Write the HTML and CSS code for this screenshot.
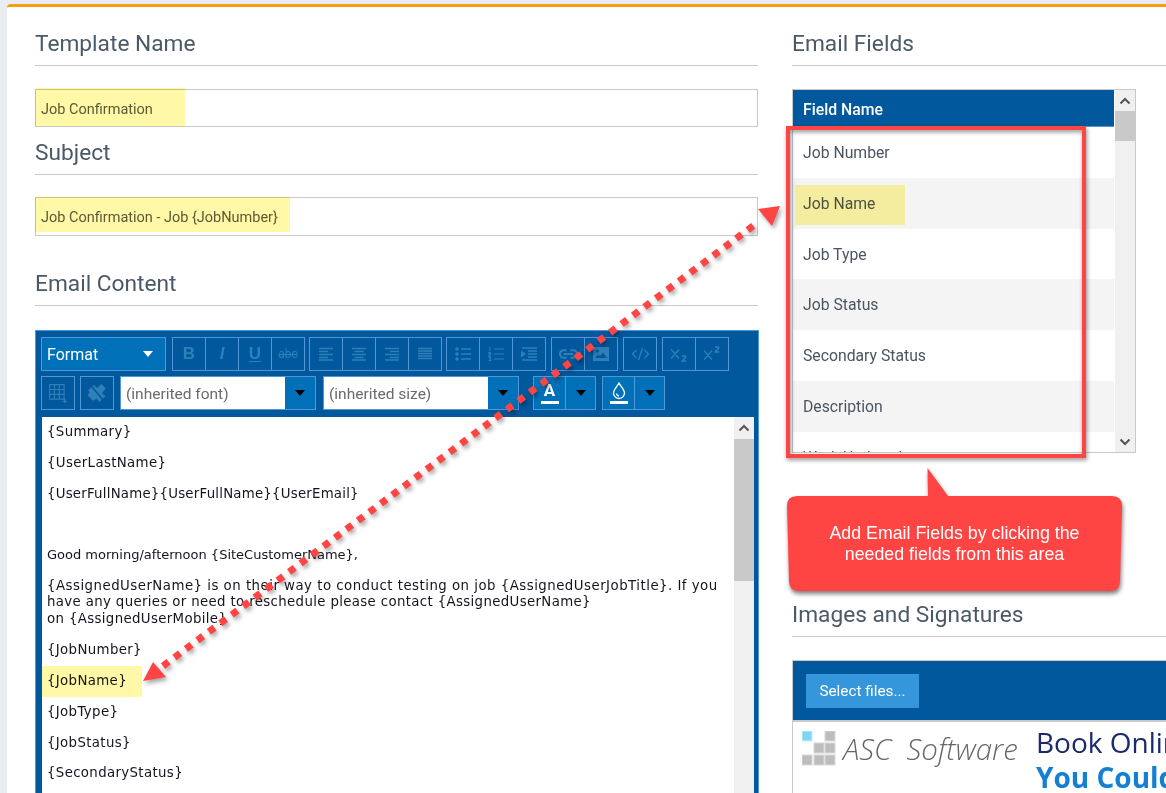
FILE: index.html
```html
<!DOCTYPE html>
<html lang="en">
<head>
<meta charset="utf-8">
<title>Email Template</title>
<link rel="stylesheet" href="styles.css">
</head>
<body>
<svg class="defs" width="0" height="0">
  <defs>
    <symbol id="i-left" viewBox="0 0 16 14"><path d="M1 1.500h14M1 4.500h9M1 7.500h14M1 10.500h9M1 13h14" /></symbol>
    <symbol id="i-center" viewBox="0 0 16 14"><path d="M1 1.500h14M3.500 4.500h9M1 7.500h14M3.500 10.500h9M1 13h14" /></symbol>
    <symbol id="i-right" viewBox="0 0 16 14"><path d="M1 1.500h14M6 4.500h9M1 7.500h14M6 10.500h9M1 13h14" /></symbol>
    <symbol id="i-just" viewBox="0 0 16 14"><path d="M1 1.500h14M1 4h14M1 6.500h14M1 9h14M1 11.500h14" /></symbol>
    <symbol id="i-caret" viewBox="0 0 10 6"><path class="fill" d="M0 0h10L5 6z" /></symbol>
  </defs>
</svg>

<main class="card">
  <section class="col-left">
    <h2 class="heading">Template Name</h2>
    <div class="field field-name">Job Confirmation</div>
    <h2 class="heading heading-subject">Subject</h2>
    <div class="field field-subject">Job Confirmation - Job {JobNumber}</div>
    <h2 class="heading heading-content">Email Content</h2>

    <div class="editor">
      <div class="toolbar">
        <div class="tool-row">
          <div class="format">Format<svg class="caret"><use href="#i-caret"/></svg></div>
          <div class="group ml2">
            <span class="btn txt"><b>B</b></span>
            <span class="btn txt"><i class="it">I</i></span>
            <span class="btn txt"><u class="under">U</u></span>
            <span class="btn txt"><s class="strike">abc</s></span>
          </div>
          <div class="group">
            <span class="btn"><svg class="ico"><use href="#i-left"/></svg></span>
            <span class="btn"><svg class="ico"><use href="#i-center"/></svg></span>
            <span class="btn"><svg class="ico"><use href="#i-right"/></svg></span>
            <span class="btn"><svg class="ico"><use href="#i-just"/></svg></span>
          </div>
          <div class="group">
            <span class="btn"><svg class="ico" viewBox="0 0 16 14"><circle class="fill" cx="2" cy="2" r="1.800"/><circle class="fill" cx="2" cy="7" r="1.800"/><circle class="fill" cx="2" cy="12" r="1.800"/><path d="M6 2h10M6 7h10M6 12h10"/></svg></span>
            <span class="btn"><svg class="ico" viewBox="0 0 16 14"><path d="M1 .8l1-.5v4M.5 5.500h2.500M.6 6.500h2.200v1.200H1L.6 9.200h2.500M.6 10.500h2.500L1.500 12h1.500v1.500H.6M6 2h10M6 7h10M6 12h10" stroke-width="1"/></svg></span>
            <span class="btn"><svg class="ico" viewBox="0 0 16 14"><path d="M1 1h15M7 4h9M7 7h9M7 10h9M1 13h15"/><path class="fill nostroke" d="M0 3.500v7l5-3.500z"/></svg></span>
          </div>
          <div class="group ml1">
            <span class="btn"><svg class="ico ico-wide" viewBox="0 0 20 12"><path stroke-width="2.200" d="M8 2H5a4 4 0 000 8h3M12 2h3a4 4 0 010 8h-3M5 6h10"/></svg></span>
            <span class="btn"><svg class="ico" viewBox="0 0 16 14"><path class="fill nostroke" fill-rule="evenodd" d="M0 0h16v14H0zM2 11h12L10 5.500 7 9 5 7.500zM4.500 2.500a1.500 1.500 0 100 3 1.500 1.500 0 000-3z"/></svg></span>
          </div>
          <div class="group ml1">
            <span class="btn"><svg class="ico ico-wide" viewBox="0 0 18 14"><path stroke-width="1.300" d="M5 3L1 7l4 4M13 3l4 4-4 4M11 1L7 13"/></svg></span>
          </div>
          <div class="group ml1">
            <span class="btn"><svg class="ico ico-script" viewBox="0 0 16 14"><path stroke-width="1.300" d="M1 3l7 8M8 3l-7 8M11 9.500a1.700 1.700 0 013 0c0 1.500-3 2-3.200 3.800h3.600"/></svg></span>
            <span class="btn"><svg class="ico ico-script" viewBox="0 0 16 14"><path stroke-width="1.300" d="M1 4l7 8M8 4l-7 8M11 1.500a1.700 1.700 0 013 0c0 1.500-3 2-3.200 3.800h3.600"/></svg></span>
          </div>
        </div>
        <div class="tool-row">
          <div class="group">
            <span class="btn"><svg class="ico ico-big" viewBox="0 0 18 18"><path stroke-width="1" d="M1.500 1.500h13v13h-13zM1.500 5.800h13M1.500 10.200h13M5.800 1.500v13M10.200 1.500v13M13 16.500h4M15 14.500v3.500"/></svg></span>
          </div>
          <div class="group">
            <span class="btn"><svg class="ico ico-big" viewBox="0 0 18 18"><path class="fill nostroke" d="M1 6.500L6 1.500l3 3L13 1l4 4-3.500 4 3 3-5 5-3-3-3 2-5-5 2-3z"/><path stroke-width="1.400" class="cut" d="M4 3l11 13"/></svg></span>
          </div>
          <div class="combo ml1">
            <span class="combo-input">(inherited font)</span>
            <span class="combo-btn"><svg class="caret"><use href="#i-caret"/></svg></span>
          </div>
          <div class="combo ml2">
            <span class="combo-input">(inherited size)</span>
            <span class="combo-btn"><svg class="caret"><use href="#i-caret"/></svg></span>
          </div>
          <div class="split ml9">
            <span class="split-main"><span class="color-a">A</span></span>
            <span class="split-arrow"><svg class="caret"><use href="#i-caret"/></svg></span>
          </div>
          <div class="split ml1">
            <span class="split-main"><svg class="drop" viewBox="0 0 14 18"><path d="M7 1C5.500 4 1.500 7.500 1.500 11a5.500 5.500 0 0011 0C12.500 7.500 8.500 4 7 1zM4.500 11.500a2.800 2.800 0 002.500 2.500"/></svg><span class="drop-bar"></span></span>
            <span class="split-arrow"><svg class="caret"><use href="#i-caret"/></svg></span>
          </div>
        </div>
      </div>

      <div class="content">
        <div class="doc">
          <p>{Summary}</p>
          <p>{UserLastName}</p>
          <p class="snug">{UserFullName}{UserFullName}{UserEmail}</p>
          <p>&nbsp;</p>
          <p class="tight">Good morning/afternoon {SiteCustomerName},</p>
          <p class="long"><span class="wide">{AssignedUserName} is on their way to conduct testing on job {AssignedUserJobTitle}. If you</span><br>have any queries or need to reschedule please contact {AssignedUserName}<br>on {AssignedUserMobile}</p>
          <p>{JobNumber}</p>
          <p>{JobName}</p>
          <p>{JobType}</p>
          <p>{JobStatus}</p>
          <p>{SecondaryStatus}</p>
          <p>{Description}</p>
        </div>
        <div class="scrollbar editor-scroll">
          <span class="sb-btn"><svg class="chev" viewBox="0 0 12 8"><path d="M1.500 6.500L6 2l4.500 4.500"/></svg></span>
          <span class="sb-thumb editor-thumb"></span>
        </div>
      </div>
    </div>
  </section>

  <section class="col-right">
    <h2 class="heading">Email Fields</h2>
    <div class="fields-box">
      <div class="fields-list">
        <div class="fields-head">Field Name</div>
        <div class="fields-row">Job Number</div>
        <div class="fields-row alt">Job Name</div>
        <div class="fields-row">Job Type</div>
        <div class="fields-row alt">Job Status</div>
        <div class="fields-row">Secondary Status</div>
        <div class="fields-row alt">Description</div>
        <div class="fields-row">Work Undertaken</div>
      </div>
      <div class="scrollbar fields-scroll">
        <span class="sb-btn"><svg class="chev" viewBox="0 0 12 8"><path d="M1.500 6.500L6 2l4.500 4.500"/></svg></span>
        <span class="sb-thumb fields-thumb"></span>
        <span class="sb-btn sb-end"><svg class="chev" viewBox="0 0 12 8"><path d="M1.500 1.500L6 6l4.500-4.500"/></svg></span>
      </div>
    </div>

    <h2 class="heading heading-images">Images and Signatures</h2>
    <div class="images-box">
      <div class="upload-bar"><span class="select-btn">Select files...</span></div>
      <div class="gallery">
        <div class="logo">
          <svg class="logo-mark" viewBox="0 0 34 35">
            <rect class="sq-cyan" x="0" y="0" width="10" height="10"/>
            <rect class="sq" x="23" y="0" width="10" height="10"/>
            <rect class="sq" x="12" y="12" width="10" height="10"/>
            <rect class="sq" x="23" y="12" width="10" height="10"/>
            <rect class="sq" x="0" y="24" width="10" height="10"/>
            <rect class="sq" x="12" y="24" width="10" height="10"/>
            <rect class="sq" x="23" y="24" width="10" height="10"/>
          </svg>
          <span class="logo-text">ASC</span>
          <span class="logo-text logo-soft">Software</span>
        </div>
        <div class="banner">
          <div class="banner-top">Book Online</div>
          <div class="banner-bottom">You Could</div>
        </div>
      </div>
    </div>
  </section>
</main>

<!-- Annotations laid over the screenshot -->
<div class="mark mark-name"></div>
<div class="mark mark-subject"></div>
<div class="mark mark-field"></div>
<div class="mark mark-job"></div>

<svg class="annot" viewBox="0 0 1166 793" width="1166" height="793">
  <rect class="annot-rect" x="788" y="128" width="296" height="328"/>
  <path class="annot-dots" d="M163 666L757 223"/>
  <path class="annot-head" d="M780 206L758 209L772 226Z"/>
  <path class="annot-head" d="M143 681L153 662L166 677Z"/>
  <path class="annot-callout" d="M797 496H928L927.500 468L948 496H1112Q1122 496 1122 506L1120 581Q1120 591 1110 591H799Q789 591 789 581L787 506Q787 496 797 496Z"/>
</svg>
<div class="callout-text">Add Email Fields by clicking the<br>needed fields from this area</div>
</body>
</html>
```
FILE: styles.css
```css
* { box-sizing: border-box; }
html, body { margin: 0; height: 793px; overflow: hidden; }
body { background: #e9edf2; font-family: Roboto, "Liberation Sans", sans-serif; position: relative; width: 1166px; }
.defs { position: absolute; }
.card { margin: 4px 0 0 7px; height: 789px; overflow: hidden; background: #fff; border-top: 3px solid #f59e12; border-top-left-radius: 4px; padding: 24px 0 0 28px; display: flex; gap: 34px; }
.col-left { width: 723px; flex: none; }
.col-right { flex: 1; min-width: 0; overflow: hidden; }
.heading { margin: 0; font-size: 22.700px; line-height: 26px; font-weight: 400; color: #4a5967; padding-bottom: 8px; border-bottom: 1px solid #c9c9c9; }
.heading-subject { margin-top: 13px; }
.heading-content { margin-top: 35px; }
.heading-images { margin-top: 149px; }
.field { margin-top: 23px; height: 38px; border: 1px solid #c9c9c9; padding: 1px 0 0 5px; font-size: 14.500px; line-height: 37px; color: #5b5b52; }
.field-subject { margin-top: 22px; height: 39px; line-height: 38px; }

.editor { margin-top: 24px; width: 724px; background: #01589d; border: 1px solid #4f97d9; padding: 6px 5px 0; height: 480px; }
.toolbar { display: flex; flex-direction: column; gap: 5px; }
.tool-row { display: flex; gap: 4px; height: 34px; }
.tool-row + .tool-row { gap: 5px; }
.format { width: 125px; background: #0071b9; border: 1px solid #4f97d9; color: #fff; font-size: 16px; padding: 0 12px 0 5px; display: flex; align-items: center; justify-content: space-between; }
.caret { width: 10px; height: 6px; fill: #fff; display: block; }
.fill { fill: currentColor; stroke: none; }
.group { display: flex; }
.ml1 { margin-left: 1px; }
.ml2 { margin-left: 2px; }
.ml9 { margin-left: 9px; }
.btn { width: 34px; height: 34px; border: 1px solid #4f97d9; display: flex; align-items: center; justify-content: center; color: #2f80b8; }
.btn + .btn { margin-left: -1px; }
.txt { font-family: "Liberation Sans", sans-serif; font-size: 17px; font-weight: 700; }
.it { font-family: "Liberation Sans", sans-serif; font-weight: 700; font-size: 17px; }
.under { text-underline-offset: 2px; }
.strike { font-size: 12px; font-weight: 400; font-family: Roboto, sans-serif; }
.ico { width: 16px; height: 14px; fill: none; stroke: #2f80b8; stroke-width: 1.500; color: #2f80b8; overflow: visible; }
.ico-wide { width: 19px; }
.ico-script { width: 18px; height: 16px; }
.ico-big { width: 20px; height: 20px; }
.nostroke { stroke: none; }
.cut { stroke: #01589d; }
.combo { width: 196px; height: 34px; display: flex; border: 1px solid #4f97d9; background: #0071b9; }
.combo-input { flex: 1; background: #fff; color: #6b6b6b; font-size: 15.500px; line-height: 34px; padding-left: 5px; }
.combo-btn { width: 30px; display: flex; align-items: center; justify-content: center; }
.split { display: flex; height: 34px; width: 63px; border: 1px solid #4f97d9; background: #0071b9; }
.split-main { width: 32px; border-right: 1px solid #4f97d9; display: flex; flex-direction: column; align-items: center; justify-content: center; position: relative; }
.split-arrow { flex: 1; display: flex; align-items: center; justify-content: center; }
.color-a { color: #fff; font: 700 17px/16px Roboto, sans-serif; border-bottom: 3px solid #fff; width: 18px; text-align: center; padding-bottom: 3px; }
.drop { width: 14px; height: 18px; fill: none; stroke: #fff; stroke-width: 1.300; }
.drop-bar { display: block; width: 18px; height: 3px; background: #fff; margin-top: 1px; }

.content { margin: 7px 0 0 1px; display: flex; background: #fff; height: 400px; width: 712px; }
.doc { flex: 1; padding: 7px 0 0 5px; font-family: "DejaVu Sans", Verdana, sans-serif; font-size: 13.330px; letter-spacing: .35px; line-height: 16px; color: #14141f; white-space: nowrap; overflow: hidden; }
.doc p { margin: 0 0 14.800px; }
.doc .tight { font-size: 13px; letter-spacing: 0; }
.doc .snug { letter-spacing: .22px; }
.doc .long { line-height: 16.500px; }
.wide { letter-spacing: .48px; }

.scrollbar { background: #f0f0f0; display: flex; flex-direction: column; flex: none; position: relative; }
.editor-scroll { width: 20px; }
.sb-btn { height: 22px; display: flex; align-items: center; justify-content: center; }
.chev { width: 12px; height: 8px; fill: none; stroke: #555; stroke-width: 2; }
.sb-thumb { display: block; background: #c9c9c9; }
.editor-thumb { height: 142px; }
.fields-thumb { height: 30px; }

.fields-box { margin-top: 23px; width: 344px; height: 364px; border: 1px solid #c9c9c9; display: flex; }
.fields-list { flex: 1; overflow: hidden; }
.fields-head { height: 37px; background: #01589d; border-bottom: 1px solid #4f97d9; color: #fff; font-size: 15.800px; font-weight: 500; line-height: 40px; padding-left: 10px; }
.fields-row { height: 50.750px; padding-left: 10px; color: #4b5560; font-size: 15.750px; line-height: 52px; }
.fields-row.alt { background: #f4f4f4; }
.fields-scroll { width: 20px; margin-left: 1px; }
.fields-scroll .sb-btn { height: 21px; }
.sb-end { margin-top: auto; }

.images-box { margin-top: 23px; border: 1px solid #c9c9c9; border-right: 0; height: 135px; overflow: hidden; }
.upload-bar { height: 59px; background: #01589d; padding: 13px 0 0 13px; }
.select-btn { display: block; width: 113px; height: 34px; background: #3596dc; color: #fff; font-size: 15.300px; line-height: 34px; text-align: center; }
.gallery { border-top: 2px solid #c9c9c9; display: flex; padding: 9px 0 0 9px; white-space: nowrap; }
.logo { display: flex; align-items: flex-start; width: 234px; flex: none; }
.logo-mark { width: 34px; height: 35px; flex: none; }
.sq { fill: #bdbdbd; stroke: #d8d8d8; stroke-width: 1; }
.sq-cyan { fill: #7fd6f3; stroke: #c9eefa; stroke-width: 1; }
.logo-text { font-family: "Open Sans", sans-serif; font-style: italic; font-weight: 300; font-size: 29.500px; line-height: 36px; color: #666; margin-left: 7px; }
.logo-soft { margin-left: 15px; }
.banner { font-family: "Open Sans", sans-serif; font-size: 28px; line-height: 35px; margin-top: -6px; }
.banner-top { color: #1b2a6b; }
.banner-bottom { color: #1480d0; font-weight: 700; }

.mark { position: absolute; mix-blend-mode: multiply; background: #fff8a6; }
.mark-name { left: 35px; top: 88px; width: 150px; height: 38px; }
.mark-subject { left: 35px; top: 197px; width: 255px; height: 35px; }
.mark-field { left: 795px; top: 185px; width: 110px; height: 40px; }
.mark-job { left: 42px; top: 666px; width: 100px; height: 31px; }

.annot { position: absolute; left: 0; top: 0; pointer-events: none; }
.annot-rect { fill: none; stroke: #ff4444; stroke-width: 4; filter: drop-shadow(1px 2px 2px rgba(0,0,0,.45)); }
.annot-dots { fill: none; stroke: #ff4444; stroke-width: 7; stroke-dasharray: 7 7.300; filter: drop-shadow(2px 3px 2px rgba(0,0,0,.35)); }
.annot-head { fill: #ff4444; filter: drop-shadow(2px 3px 2px rgba(0,0,0,.35)); }
.annot-callout { fill: #ff4444; filter: drop-shadow(1px 3px 2px rgba(0,0,0,.5)); }
.callout-text { position: absolute; left: 787px; top: 523px; width: 335px; text-align: center; color: #fff; font-family: "Liberation Sans", Arial, sans-serif; font-size: 17.800px; line-height: 21px; }
```
